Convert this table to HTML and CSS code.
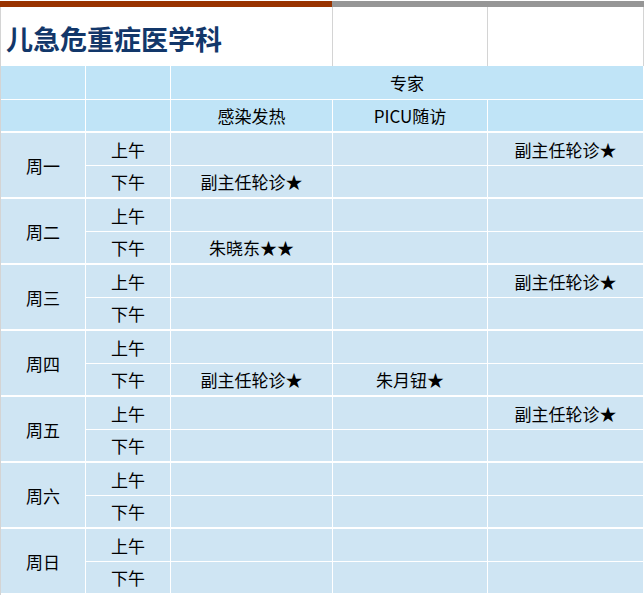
FILE: index.html
```html
<!DOCTYPE html>
<html lang="zh-CN">
<head>
<meta charset="utf-8">
<title>儿急危重症医学科</title>
<link rel="stylesheet" href="styles.css">
</head>
<body>
<div class="sheet">
  <div class="topbar"><div class="bar-main"></div><div class="bar-rest"></div></div>
  <div class="title-row">
    <div class="title-cell">儿急危重症医学科</div>
    <div class="title-blank"></div>
    <div class="title-blank"></div>
  </div>
  <div class="grid">
    <div class="hd hd1"></div>
    <div class="hd hd1"></div>
    <div class="hd hd1 span3">专家</div>

    <div class="hd hd2"></div>
    <div class="hd hd2"></div>
    <div class="hd hd2">感染发热</div>
    <div class="hd hd2">PICU随访</div>
    <div class="hd hd2"></div>

    <div class="c day">周一</div>
    <div class="c am">上午</div><div class="c am"></div><div class="c am"></div><div class="c am">副主任轮诊★</div>
    <div class="c pm">下午</div><div class="c pm">副主任轮诊★</div><div class="c pm"></div><div class="c pm"></div>

    <div class="c day">周二</div>
    <div class="c am">上午</div><div class="c am"></div><div class="c am"></div><div class="c am"></div>
    <div class="c pm">下午</div><div class="c pm">朱晓东★★</div><div class="c pm"></div><div class="c pm"></div>

    <div class="c day">周三</div>
    <div class="c am">上午</div><div class="c am"></div><div class="c am"></div><div class="c am">副主任轮诊★</div>
    <div class="c pm">下午</div><div class="c pm"></div><div class="c pm"></div><div class="c pm"></div>

    <div class="c day">周四</div>
    <div class="c am">上午</div><div class="c am"></div><div class="c am"></div><div class="c am"></div>
    <div class="c pm">下午</div><div class="c pm">副主任轮诊★</div><div class="c pm">朱月钮★</div><div class="c pm"></div>

    <div class="c day">周五</div>
    <div class="c am">上午</div><div class="c am"></div><div class="c am"></div><div class="c am">副主任轮诊★</div>
    <div class="c pm">下午</div><div class="c pm"></div><div class="c pm"></div><div class="c pm"></div>

    <div class="c day">周六</div>
    <div class="c am">上午</div><div class="c am"></div><div class="c am"></div><div class="c am"></div>
    <div class="c pm">下午</div><div class="c pm"></div><div class="c pm"></div><div class="c pm"></div>

    <div class="c day">周日</div>
    <div class="c am">上午</div><div class="c am"></div><div class="c am"></div><div class="c am"></div>
    <div class="c pm">下午</div><div class="c pm"></div><div class="c pm"></div><div class="c pm"></div>
  </div>
</div>
</body>
</html>
```

FILE: styles.css
```css
* { box-sizing: border-box; }
html, body { margin: 0; padding: 0; background: #ffffff; }
body {
  font-family: "Noto Sans CJK SC", "Noto Sans", sans-serif;
  color: #000000;
}
.sheet { width: 644px; }
.topbar { display: flex; height: 6px; margin-top: 1px; }
.bar-main { width: 332px; background: #993300; }
.bar-rest { flex: 1; background: #969696; }

.title-row {
  display: grid;
  grid-template-columns: 332px 155px 156px;
  height: 59px;
  border-left: 1px solid #d4d4d4;
}
.title-cell, .title-blank { border-right: 1px solid #d4d4d4; }
.title-cell {
  display: flex;
  align-items: center;
  padding: 3px 0 0 5px;
  font-size: 27px;
  font-weight: 700;
  color: #12376a;
}

.grid {
  display: grid;
  grid-template-columns: 84px 84px 161px 154px 155px;
  grid-template-rows: 34px repeat(15, 33px);
  column-gap: 1px;
  width: 644px;
  border-left: 1px solid #d4d4d4;
  background: #ffffff;
  font-size: 17px;
}
.hd, .c {
  display: flex;
  align-items: center;
  justify-content: center;
  white-space: nowrap;
}
.hd { background: #c0e4f7; }
.hd1 { margin-bottom: 1px; }
.hd2 { margin-bottom: 2px; }
.span3 { grid-column: span 3; }
.c { background: #cfe5f3; }
.am { margin-bottom: 1px; }
.pm { margin-bottom: 2px; }
.day { grid-row: span 2; margin-bottom: 2px; }
```
